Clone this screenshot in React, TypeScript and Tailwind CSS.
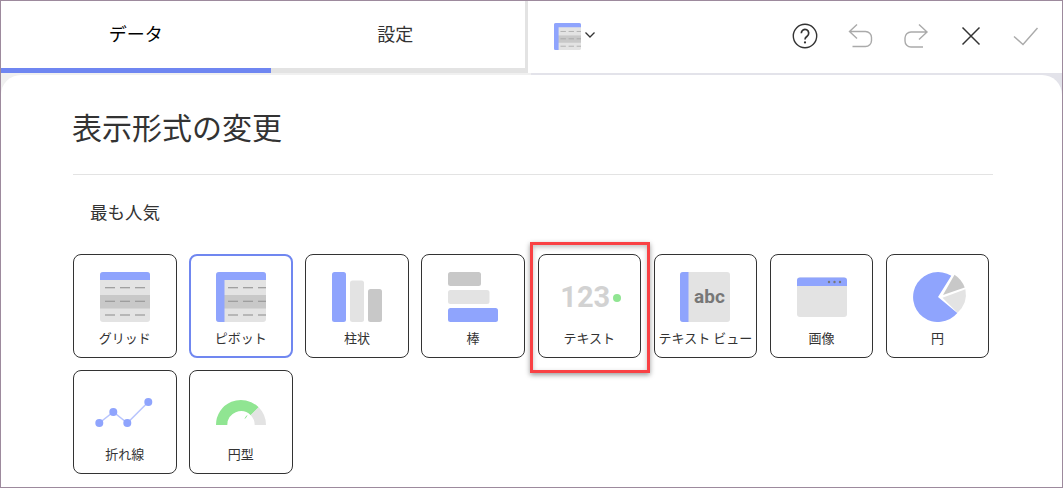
import React from "react";

const BLUE = "#8fa4fd";
const LIGHT = "#e3e3e3";
const MID = "#c8c8c8";
const GREEN = "#90e592";

function Dashes({ x }: { x: number }) {
  return (
    <g stroke="#999" strokeWidth="1.2">
      {[15.7, 29.3, 43].map((y) => (
        <g key={y}>
          <line x1={x} y1={y} x2={x + 10} y2={y} />
          <line x1={x + 15} y1={y} x2={x + 25} y2={y} />
          <line x1={x + 30} y1={y} x2={x + 40} y2={y} />
        </g>
      ))}
    </g>
  );
}

function GridIcon() {
  return (
    <svg width="50" height="50" viewBox="0 0 50 50">
      <rect width="50" height="50" rx="3" fill={LIGHT} />
      <rect y="23" width="50" height="13.5" fill={MID} />
      <path d="M0 8V3a3 3 0 0 1 3-3h44a3 3 0 0 1 3 3v5z" fill={BLUE} />
      <Dashes x={5} />
    </svg>
  );
}

function PivotIcon({ size = 50 }: { size?: number }) {
  return (
    <svg width={size} height={size} viewBox="0 0 50 50">
      <rect width="50" height="50" rx="3" fill={LIGHT} />
      <rect y="23" width="50" height="13.5" fill={MID} />
      <path d="M0 47V3a3 3 0 0 1 3-3h44a3 3 0 0 1 3 3v5H8.500v42H3a3 3 0 0 1-3-3z" fill={BLUE} />
      <Dashes x={12} />
    </svg>
  );
}

function ColumnIcon() {
  return (
    <svg width="50" height="50" viewBox="0 0 50 50">
      <rect x="0" y="0" width="14" height="50" rx="2.500" fill={BLUE} />
      <rect x="18" y="8.500" width="14" height="41.500" rx="2.500" fill={LIGHT} />
      <rect x="36" y="17" width="14" height="33" rx="2.500" fill={MID} />
    </svg>
  );
}

function BarIcon() {
  return (
    <svg width="50" height="50" viewBox="0 0 50 50">
      <rect x="0" y="0" width="33" height="14" rx="2.500" fill={MID} />
      <rect x="0" y="18" width="41.500" height="14" rx="2.500" fill={LIGHT} />
      <rect x="0" y="36" width="50" height="14" rx="2.500" fill={BLUE} />
    </svg>
  );
}

function TextIcon() {
  return (
    <div className="ml-[8px] flex h-[50px] w-[66px] items-center gap-[3px]">
      <span className="font-['Roboto',sans-serif] text-[29px] leading-none font-bold text-[#d2d2d2]">123</span>
      <span className="mt-[1px] h-[8px] w-[8px] rounded-full bg-[#90e592]" />
    </div>
  );
}

function TextViewIcon() {
  return (
    <svg width="50" height="50" viewBox="0 0 50 50">
      <rect width="50" height="50" rx="3" fill={LIGHT} />
      <path d="M3 0h5.500v50H3a3 3 0 0 1-3-3V3a3 3 0 0 1 3-3z" fill={BLUE} />
      <text x="29.500" y="31" textAnchor="middle" fontFamily="Roboto, sans-serif" fontWeight="700" fontSize="19" fill="#777">
        abc
      </text>
    </svg>
  );
}

function ImageIcon() {
  return (
    <svg width="50" height="50" viewBox="0 0 50 50">
      <rect y="5.500" width="50" height="39.500" rx="3" fill={LIGHT} />
      <path d="M0 14V8.500a3 3 0 0 1 3-3h44a3 3 0 0 1 3 3V14z" fill={BLUE} />
      <circle cx="32" cy="10" r="1.200" fill="#777" />
      <circle cx="37.500" cy="10" r="1.200" fill="#777" />
      <circle cx="43" cy="10" r="1.200" fill="#777" />
    </svg>
  );
}

function PieIcon() {
  return (
    <svg className="ml-[7px]" width="56" height="50" viewBox="0 0 56 50">
      <path d="M38.300 3.800A25 25 0 1 0 44.300 41L25 25z" fill={BLUE} />
      <path d="M30 23L41.500 2.800A25 25 0 0 1 51.700 15.600z" fill={MID} />
      <path d="M29.500 25.700L52.400 17.300A25 25 0 0 1 44.500 40.700z" fill={LIGHT} />
    </svg>
  );
}

function LineIcon() {
  return (
    <svg className="-ml-[1px]" width="58" height="50" viewBox="0 -2 58 50">
      <polyline points="4.300,33 18.300,22 32.300,33 53.300,12" fill="none" stroke="#b7c4fd" strokeWidth="1.500" />
      <circle cx="4.300" cy="33" r="4" fill={BLUE} />
      <circle cx="18.300" cy="22" r="4" fill={BLUE} />
      <circle cx="32.300" cy="33" r="4" fill={BLUE} />
      <circle cx="53.300" cy="12" r="4" fill={BLUE} />
    </svg>
  );
}

function GaugeIcon() {
  return (
    <svg width="50" height="50" viewBox="0 -2 50 50">
      <path d="M0 35a25 25 0 0 1 42.700-17.700L34.700 25.300A13.700 13.700 0 0 0 11.300 35z" fill={GREEN} />
      <path d="M42.700 17.300A25 25 0 0 1 50 35H38.700a13.700 13.700 0 0 0-4-9.700z" fill={LIGHT} />
      <line x1="29" y1="28.500" x2="31" y2="25.500" stroke={GREEN} strokeWidth="1" />
    </svg>
  );
}

const charts = [
  { label: "グリッド", icon: <GridIcon /> },
  { label: "ピボット", icon: <PivotIcon />, selected: true },
  { label: "柱状", icon: <ColumnIcon /> },
  { label: "棒", icon: <BarIcon /> },
  { label: "テキスト", icon: <TextIcon />, highlight: true },
  { label: "テキスト ビュー", icon: <TextViewIcon /> },
  { label: "画像", icon: <ImageIcon /> },
  { label: "円", icon: <PieIcon /> },
  { label: "折れ線", icon: <LineIcon /> },
  { label: "円型", icon: <GaugeIcon /> },
];

function Card({ label, icon, selected, highlight }: { label: string; icon: React.ReactNode; selected?: boolean; highlight?: boolean }) {
  return (
    <div
      className={`relative flex h-[104px] flex-col items-center rounded-[8px] bg-white pt-[17px] ${
        selected ? "border-2 border-[#7087f0]" : "border border-[#333]"
      }`}
    >
      <div className={`flex h-[50px] items-center justify-center ${selected ? "-mt-[1px]" : ""}`}>{icon}</div>
      <div className="mt-[6px] text-[13px] leading-[20px] whitespace-nowrap text-[#333]">{label}</div>
      {highlight && (
        <div className="absolute -top-[13px] -right-[10px] -bottom-[16px] -left-[9px] border-[3px] border-[#f94144] shadow-[0_2px_5px_rgba(0,0,0,0.4),inset_0_2px_5px_rgba(0,0,0,0.25)]" />
      )}
    </div>
  );
}

export default function App() {
  return (
    <div className="h-[488px] w-[1063px] overflow-hidden border border-[#9d8a9d] bg-white font-['Noto_Sans_CJK_JP',sans-serif] text-[#333]">
      <div className="flex h-[72px]">
        <div className="flex w-[527px] flex-col border-r-[3px] border-[#e3e3e3] bg-white">
          <div className="flex flex-1 pb-[3px] pl-[5px]">
            <div className="flex flex-1 items-center justify-center text-[18px] text-black">データ</div>
            <div className="flex flex-1 items-center justify-center text-[18px] text-[#333]">設定</div>
          </div>
          <div className="flex h-[5px] bg-[#e3e3e3]">
            <div className="w-[270px] bg-[#6f86f1]" />
          </div>
        </div>
        <div className="flex flex-1 items-center bg-white pr-[23px] pb-[2px] pl-[26px]">
          <PivotIcon size={27} />
          <svg className="ml-[3px] -mt-[2px]" width="12" height="8" viewBox="0 0 12 8" fill="none" stroke="#333" strokeWidth="1.300">
            <path d="M1.500 1.500L6 6l4.500-4.500" />
          </svg>
          <div className="flex-1" />
          <svg width="26" height="26" viewBox="0 0 26 26" fill="none" stroke="#333" strokeWidth="1.400">
            <circle cx="13" cy="13" r="11.700" />
            <path d="M9.300 10.200a3.700 3.700 0 1 1 5.800 3c-1.500 1-2.100 1.700-2.100 3.200" strokeWidth="1.700" />
            <circle cx="13" cy="19.400" r="1.100" fill="#333" stroke="none" />
          </svg>
          <svg className="ml-[30px]" width="26" height="26" viewBox="0 0 26 26" fill="none" stroke="#aaa" strokeWidth="1.400">
            <path d="M9 1.500L1.500 8.500 9 15.500M1.500 8.500h16a6 6 0 0 1 6 6v3a6 6 0 0 1-6 6h-13" />
          </svg>
          <svg className="ml-[29px]" width="26" height="26" viewBox="0 0 26 26" fill="none" stroke="#aaa" strokeWidth="1.400">
            <path d="M16 1.500L24 9l-8 7.500M24 9H8a6 6 0 0 0-6 6v3a6 6 0 0 0 6 6h12" />
          </svg>
          <svg className="ml-[32px]" width="20" height="20" viewBox="0 0 20 20" fill="none" stroke="#333" strokeWidth="1.500">
            <path d="M1.500 1.500l17 17M18.500 1.500l-17 17" />
          </svg>
          <svg className="ml-[32px]" width="26" height="20" viewBox="0 0 26 20" fill="none" stroke="#aaa" strokeWidth="1.400">
            <path d="M1 10.500l9 8L24.500 2" />
          </svg>
        </div>
      </div>
      <div className="flex h-[415px] bg-[linear-gradient(to_right,#f0f0f0_50%,#e3e3ea_50%)] pt-[2px]">
        <div className="flex-1 rounded-t-[20px] bg-white px-[72px] pt-[28px]">
          <h1 className="-ml-[1px] text-[30px] leading-[46px] font-normal text-[#333]">表示形式の変更</h1>
          <div className="mt-[25px] mr-[-3px] border-t border-[#e3e3e3]" />
          <div className="mt-[24px] pl-[17px] text-[17.500px] leading-[26px] text-[#333]">最も人気</div>
          <div className="mt-[29px] grid grid-cols-[repeat(8,103.500px)] gap-x-[12.640px] gap-y-[12px]">
            {charts.map((c) => (
              <Card key={c.label} {...c} />
            ))}
          </div>
        </div>
      </div>
    </div>
  );
}
